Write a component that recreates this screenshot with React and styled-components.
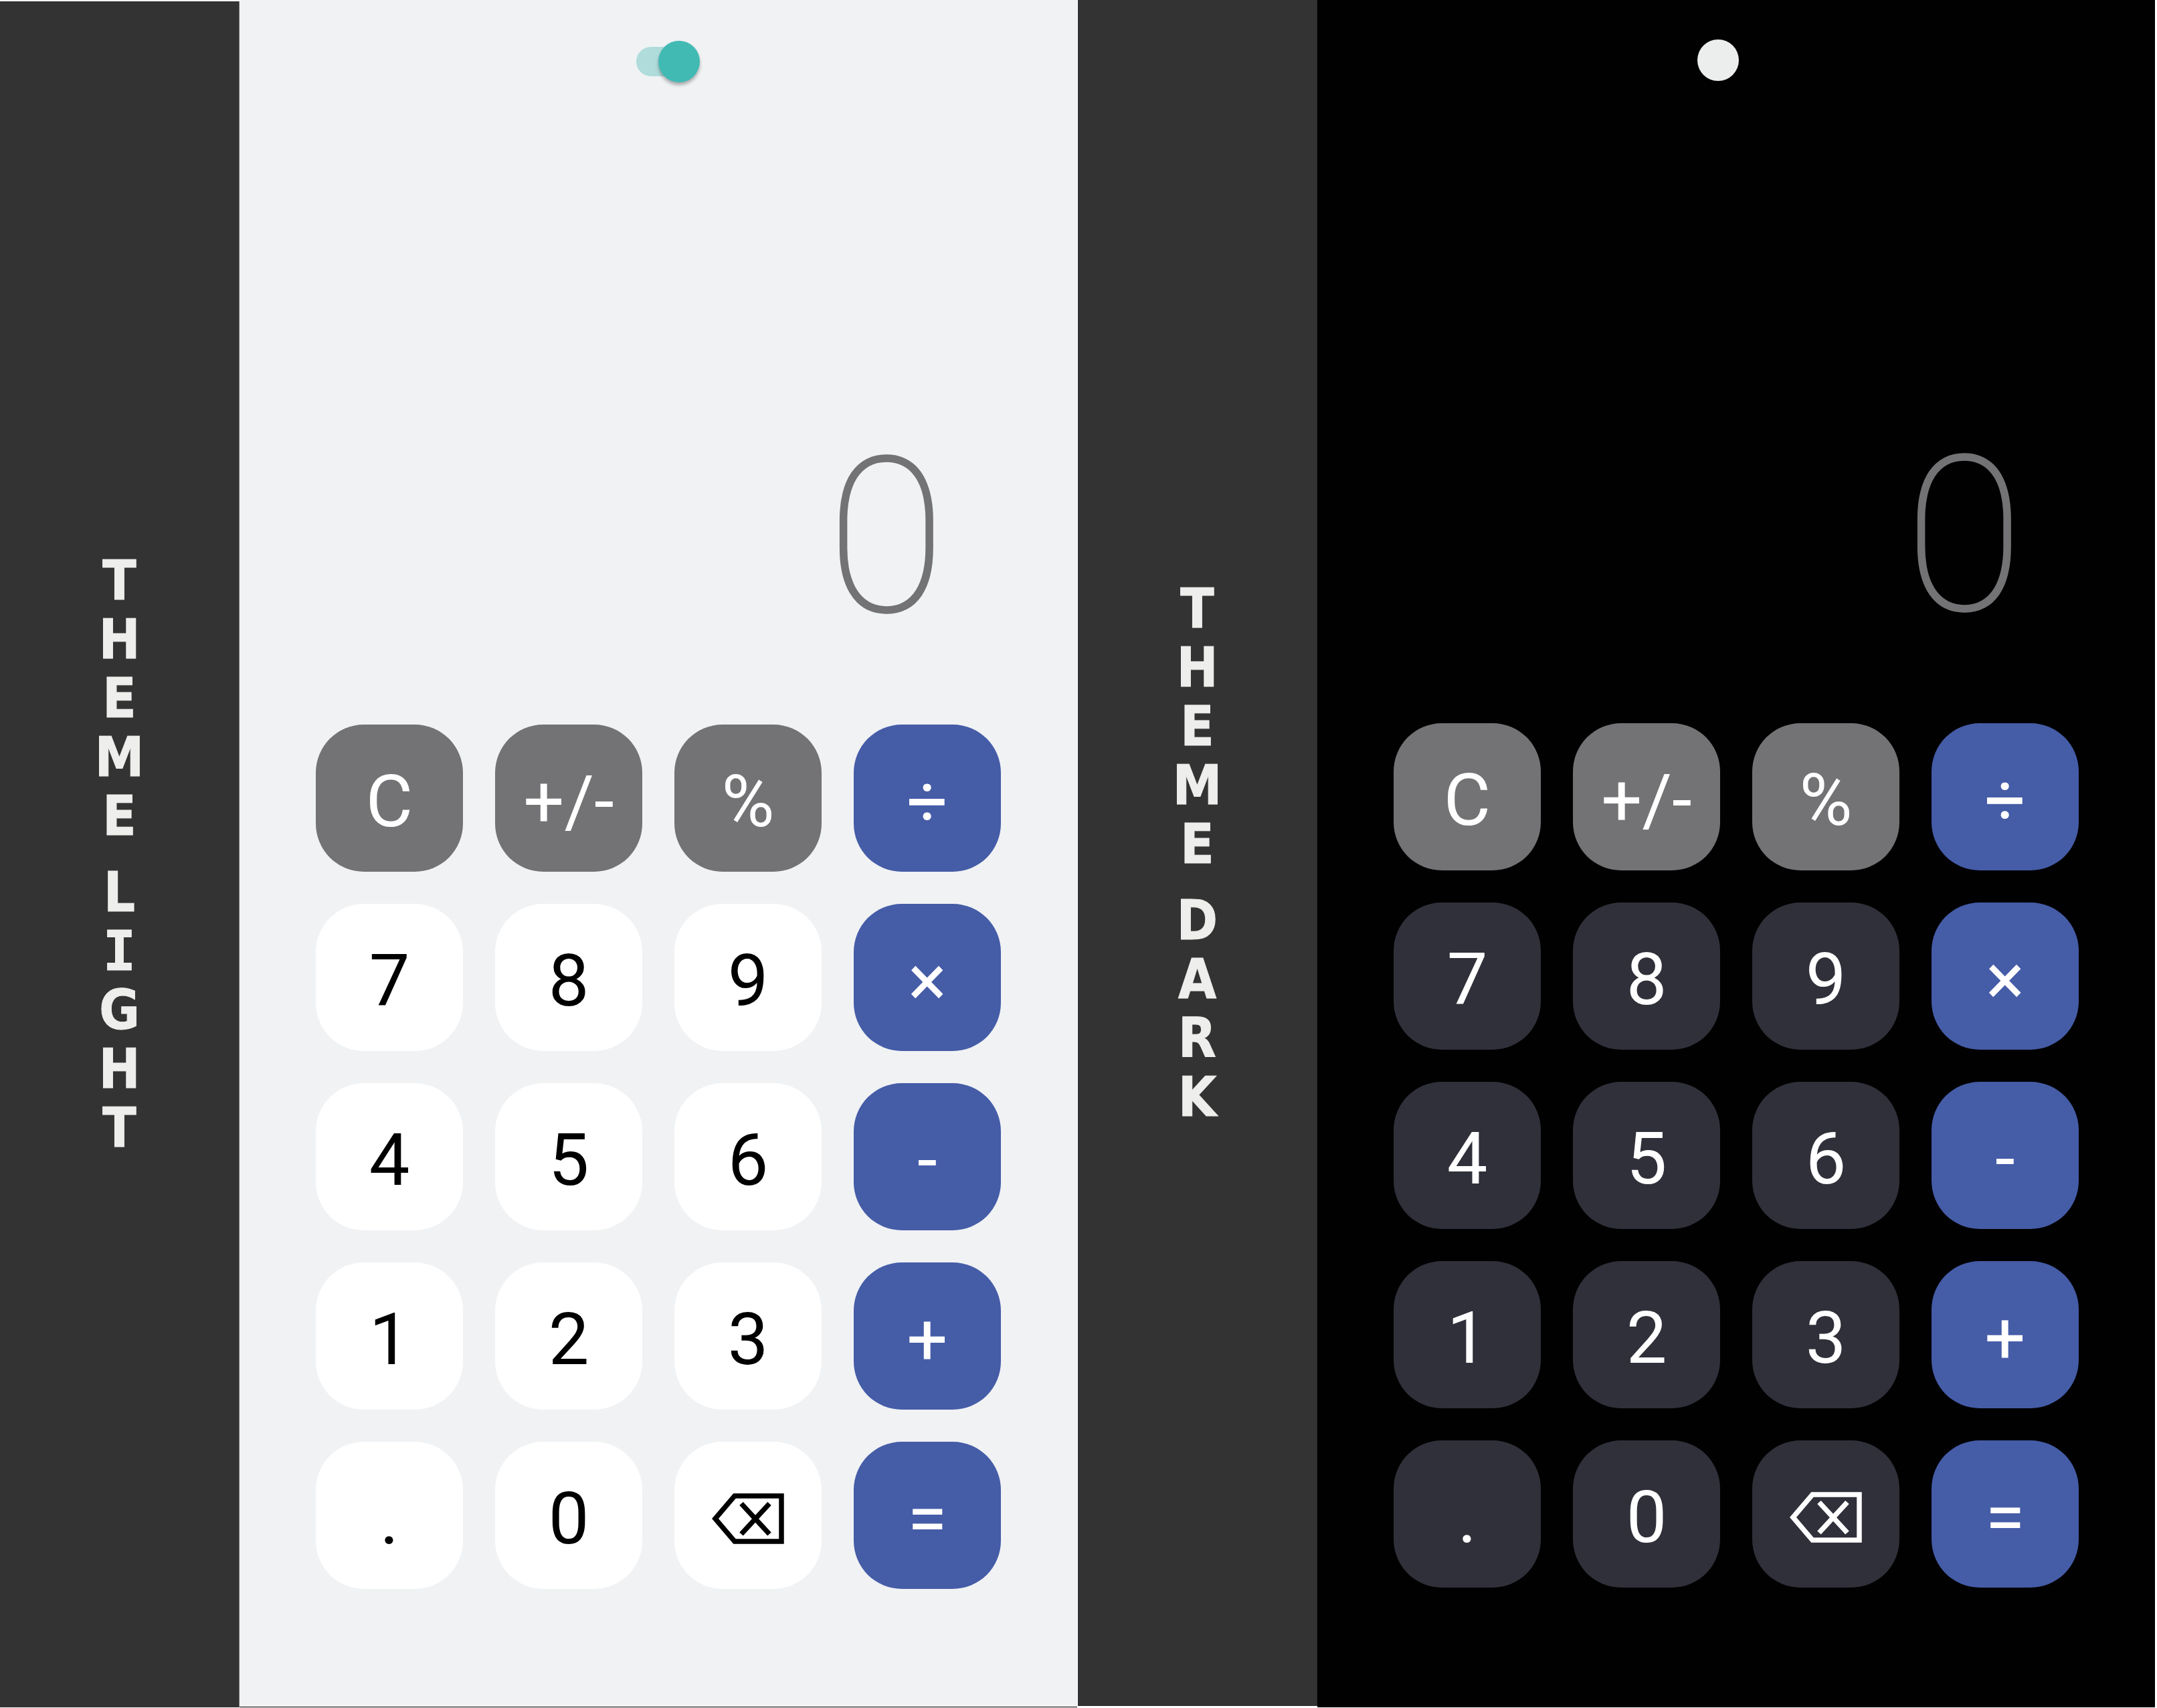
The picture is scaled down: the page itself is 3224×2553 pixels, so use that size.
import React, { useState } from "react";
import styled, { createGlobalStyle, ThemeProvider } from "styled-components";

const GlobalStyle = createGlobalStyle`
  *, *::before, *::after { box-sizing: border-box; }
  body { margin: 0; background: #ffffff; }
`;

const keyColors = {
  action: { bg: "#737375", fg: "#ffffff" },
  operator: { bg: "#455ca7", fg: "#ffffff" },
};

const light = {
  page: "#f0f2f4",
  edge: "#6e6e6e",
  display: "#737375",
  panePadding: "61px 0 176px",
  labelMargin: "2px 0 0",
  keys: { ...keyColors, digit: { bg: "#ffffff", fg: "#000000" } },
};

const dark = {
  page: "#010101",
  edge: "#2a2a2a",
  display: "#737375",
  panePadding: "59px 0 178px",
  labelMargin: "0 0 2px",
  keys: { ...keyColors, digit: { bg: "#30303a", fg: "#ffffff" } },
};

const Page = styled.main`
  display: grid;
  grid-template-columns: repeat(2, 1fr);
  gap: 1px;
  min-height: calc(100vh - 1px);
  padding-right: 3px;
  margin-bottom: 1px;
`;

const Panel = styled.section`
  display: flex;
`;

const Side = styled.h2`
  display: flex;
  flex-direction: column;
  align-items: center;
  justify-content: center;
  gap: 26px;
  flex: 0 0 358px;
  margin: ${({ theme }) => theme.labelMargin};
  background: #333333;
  border-right: 1px solid ${({ theme }) => theme.edge};
  color: #eeeeec;
  font: bold 82px/88px "DejaVu Sans Condensed", "DejaVu Sans", sans-serif;
  -webkit-text-stroke: 1px currentColor;
`;

const Word = styled.span`
  display: flex;
  flex-direction: column;
  align-items: center;
`;

const Letter = styled.span`
  font-family: ${({ $slab }) => ($slab ? '"DejaVu Sans Mono", monospace' : "inherit")};
`;

const Pane = styled.div`
  flex: 1;
  display: flex;
  flex-direction: column;
  align-items: center;
  padding: ${({ theme }) => theme.panePadding};
  background: ${({ theme }) => theme.page};
  border-bottom: 1px solid #000000;
`;

const SwitchRow = styled.label`
  display: flex;
  padding-left: 4px;
`;

const Switch = styled.input`
  appearance: none;
  position: relative;
  display: flex;
  width: 120px;
  height: 62px;
  margin: 0;
  cursor: pointer;

  &::before {
    content: "";
    position: absolute;
    inset: 9px 25px;
    border-radius: 22px;
    background: transparent;
  }
  &::after {
    content: "";
    position: relative;
    width: 62px;
    height: 62px;
    border-radius: 50%;
    background: #eceded;
  }
  &:checked { justify-content: flex-end; }
  &:checked::before { background: #b0dcdb; }
  &:checked::after {
    background: #41bab4;
    box-shadow: 0 4px 5px rgba(0, 0, 0, 0.3);
  }
`;

const Display = styled.output`
  flex: 1;
  display: flex;
  align-items: flex-end;
  justify-content: flex-end;
  width: 1024px;
  padding: 0 83px 92px 0;
  color: ${({ theme }) => theme.display};
  font: 100 322px/376px Roboto, sans-serif;
  -webkit-text-stroke: 3px currentColor;
`;

const Keypad = styled.div`
  display: grid;
  grid-template-columns: repeat(4, 220px);
  grid-auto-rows: 220px;
  gap: 48px;
`;

const Key = styled.button`
  display: flex;
  align-items: center;
  justify-content: center;
  padding: 10px 0 0;
  border: 0;
  border-radius: 72px;
  background: ${({ theme, $kind }) => theme.keys[$kind].bg};
  color: ${({ theme, $kind }) => theme.keys[$kind].fg};
  font: 400 108px/128px Roboto, sans-serif;
  cursor: pointer;
`;

function BackspaceIcon() {
  return (
    <svg width="108" height="76" viewBox="0 0 108 76" fill="none" stroke="currentColor" strokeWidth="7.5" aria-hidden="true">
      <path d="M5 38 34 4H104V72H34Z" />
      <path d="M44 15.500 86 61M86 15.500 44 61" />
    </svg>
  );
}

const keys = [
  ["C", "action"], ["+/-", "action"], ["%", "action"], ["÷", "operator"],
  ["7", "digit"], ["8", "digit"], ["9", "digit"], ["×", "operator"],
  ["4", "digit"], ["5", "digit"], ["6", "digit"], ["-", "operator"],
  ["1", "digit"], ["2", "digit"], ["3", "digit"], ["+", "operator"],
  [".", "digit"], ["0", "digit"], ["back", "digit"], ["=", "operator"],
];

function Calculator({ title, theme, on }) {
  const [checked, setChecked] = useState(on);
  return (
    <ThemeProvider theme={theme}>
      <Panel aria-label={title}>
        <Side aria-label={title}>
          {title.split(" ").map((word) => (
            <Word key={word}>
              {[...word].map((letter, i) => (
                <Letter key={i} $slab={letter === "I"}>{letter}</Letter>
              ))}
            </Word>
          ))}
        </Side>
        <Pane>
          <SwitchRow>
            <Switch
              type="checkbox"
              role="switch"
              aria-label="Light theme"
              checked={checked}
              onChange={(e) => setChecked(e.target.checked)}
            />
          </SwitchRow>
          <Display>0</Display>
          <Keypad>
            {keys.map(([name, kind]) => (
              <Key key={name} type="button" $kind={kind} aria-label={name === "back" ? "Backspace" : undefined}>
                {name === "back" ? <BackspaceIcon /> : name}
              </Key>
            ))}
          </Keypad>
        </Pane>
      </Panel>
    </ThemeProvider>
  );
}

export default function App() {
  return (
    <>
      <GlobalStyle />
      <Page>
        <Calculator title="THEME LIGHT" theme={light} on />
        <Calculator title="THEME DARK" theme={dark} on={false} />
      </Page>
    </>
  );
}
